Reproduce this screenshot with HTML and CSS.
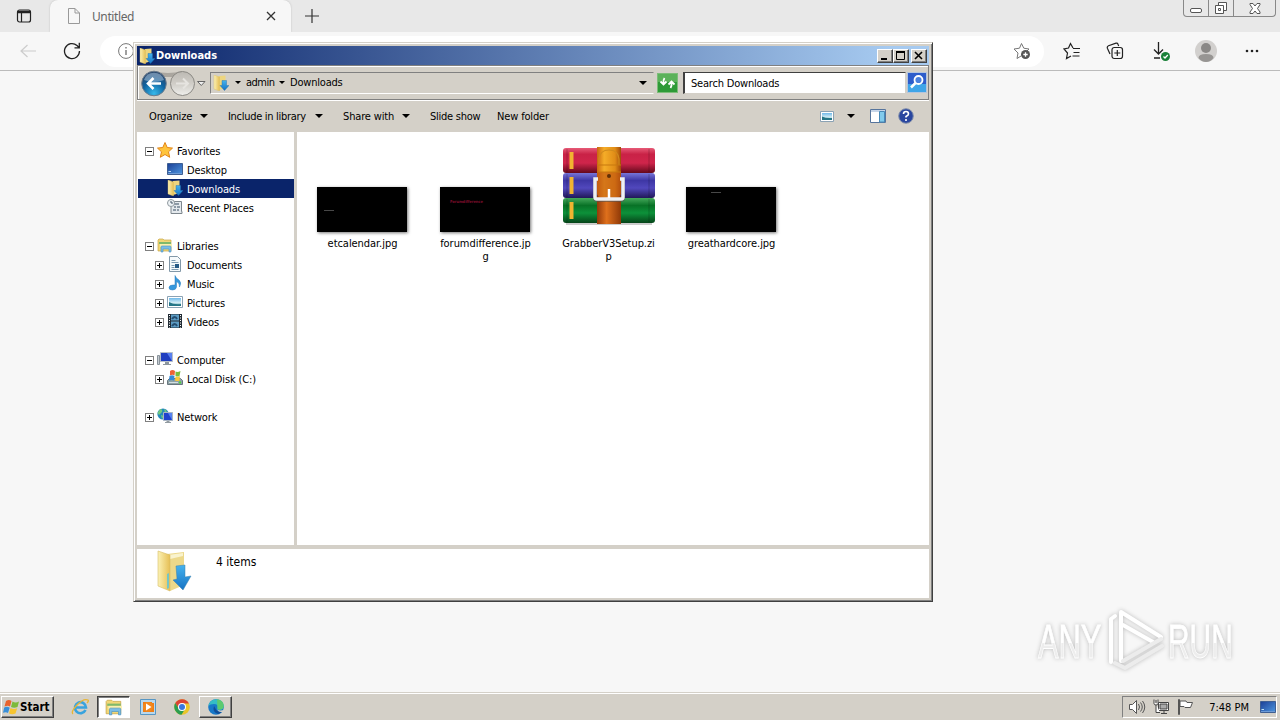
FILE: index.html
```html
<!DOCTYPE html>
<html lang="en">
<head>
    <meta charset="UTF-8">
    <title>Downloads</title>
    <link rel="stylesheet" href="styles.css">
</head>
<body>
    <!-- shared icons -->
    <svg class="icon-defs" width="0" height="0">
        <defs>
            <linearGradient id="gold" x1="0" x2="1"><stop offset="0" stop-color="#fbf1b4"/><stop offset="1" stop-color="#e6bf55"/></linearGradient>
            <linearGradient id="blue" x1="0" y1="0" x2="0" y2="1"><stop offset="0" stop-color="#45b2ee"/><stop offset="1" stop-color="#1673c4"/></linearGradient>
            <linearGradient id="screen" x1="0" y1="0" x2="1" y2="1"><stop offset="0" stop-color="#1b3f96"/><stop offset="1" stop-color="#4f98e0"/></linearGradient>
            <linearGradient id="sky" x1="0" y1="0" x2="0" y2="1"><stop offset="0" stop-color="#6fb9ea"/><stop offset=".6" stop-color="#d5eef5"/><stop offset="1" stop-color="#2a7d85"/></linearGradient>
        </defs>
        <symbol id="i-downloads" viewBox="0 0 16 16">
            <path d="M6 1l6.500-.5V13L6 15z" fill="#edd57f"/>
            <path d="M1 0l5.500 2v14L1 14z" fill="url(#gold)" stroke="#d9bd62" stroke-width=".4"/>
            <path d="M9 5.500h4.500v5H16L11.500 15.500 7 10.500h2z" fill="url(#blue)" stroke="#1b6cab" stroke-width=".4"/>
        </symbol>
        <symbol id="i-library" viewBox="0 0 16 16">
            <path d="M1 3l1-1h4l1 1h7v11H1z" fill="#f1d777" stroke="#c8a647" stroke-width=".7"/>
            <path d="M2 5h12v2H2z" fill="#7fb96c"/><path d="M3 7h12v3H3z" fill="#faf0ad"/>
            <path d="M4 15V10q0-1 1-1h8q1 0 1 1v5h-2v-3H6v3z" fill="#79bde6" stroke="#4a92c4" stroke-width=".6"/>
        </symbol>
        <symbol id="i-desktop" viewBox="0 0 16 16">
            <path d="M.5 2.500h15v11H.5z" fill="url(#screen)" stroke="#3f5f92"/>
            <path d="M1 12.500h14" stroke="#6d9bd6"/><path d="M1.500 10.500h2.500" stroke="#bfe0f5"/>
        </symbol>
        <symbol id="i-picture" viewBox="0 0 16 16">
            <path d="M.5 2.500h15v11H.5z" fill="#fff" stroke="#8ba2b4"/>
            <path d="M2 4h12v8H2z" fill="url(#sky)"/><path d="M2 8q5 3 12 2v2H2z" fill="#257687"/>
        </symbol>
    </svg>

    <div class="browser">
        <div class="tab-strip">
            <svg class="tab-actions" viewBox="0 0 16 16" width="16" height="16" fill="none" stroke="#222" stroke-width="1.200"><rect x="1.500" y="2" width="13" height="12" rx="2"/><path d="M2 4h12" stroke-width="2.500"/><path d="M5.500 5v9"/></svg>
            <div class="tab">
                <svg viewBox="0 0 14 16" width="14" height="16" fill="none" stroke="#999"><path d="M1.500.5h6.500l4.500 4.500v10.500h-11zM8 .5V5h4.500"/></svg>
                <span class="tab-title">Untitled</span>
                <svg viewBox="0 0 10 10" width="10" height="10" stroke="#333" stroke-width="1.300"><path d="M1 1l8 8M9 1L1 9"/></svg>
            </div>
            <svg class="new-tab" viewBox="0 0 14 14" width="14" height="14" stroke="#333" stroke-width="1.200"><path d="M7 0v14M0 7h14"/></svg>
            <div class="caption">
                <span><svg viewBox="0 0 13 6" width="13" height="6"><rect x=".5" y="1.500" width="11" height="4" rx="1.500" fill="#fff" stroke="#555"/></svg></span>
                <span><svg viewBox="0 0 14 14" width="14" height="14" fill="#fff" stroke="#555"><path d="M4.500 1.500h8v8h-8z"/><path d="M1.500 4.500h8v8h-8z"/><path d="M4.500 7.500h2v2h-2z"/></svg></span>
                <span><svg viewBox="0 0 12 11" width="12" height="11" fill="#fff" stroke="#555"><path d="M1 .5h3l2 2.500 2-2.500h3v1L8.500 5.500 11 9v1.500H8L6 8l-2 2.500H1V9l2.500-3.500L1 1.500z"/></svg></span>
            </div>
        </div>
        <div class="toolbar">
            <svg class="back" viewBox="0 0 16 14" width="16" height="14" fill="none" stroke="#ccc" stroke-width="1.200"><path d="M16 7H1M7.500 1L1 7l6.500 6"/></svg>
            <svg class="reload" viewBox="0 0 18 18" width="18" height="18" fill="none" stroke="#222" stroke-width="1.300"><path d="M16.500 9a7.500 7.500 0 1 1-2.500-5.500L16 5.500M16.300.8v5H11.500"/></svg>
            <div class="address">
                <svg viewBox="0 0 16 16" width="16" height="16" fill="none" stroke="#777"><circle cx="8" cy="8" r="7.400"/><path d="M8 7v5M8 4v1.600" stroke-width="1.400"/></svg>
                <svg viewBox="0 0 18 18" width="18" height="18" fill="none" stroke="#777"><path d="M8 14l-4 2.500 1-5.500-4-4 5.500-.8L8.500 1.500l2.300 4.700 5.200.8-2 2"/><circle cx="12.500" cy="12.500" r="4.500" fill="#555" stroke="none"/><path d="M12.500 10.300v4.400M10.300 12.500h4.400" stroke="#fff" stroke-width="1.300"/></svg>
            </div>
            <div class="tools">
                <svg viewBox="0 0 18 18" width="18" height="18" fill="none" stroke="#222" stroke-width="1.200"><path d="M10 6L7.500 1.500 5.500 6 1 7l3.500 4-1 5.500 4.500-2.500M10 6.500h7M10.500 10.500h6M9.500 14h7"/></svg>
                <svg viewBox="0 0 18 18" width="18" height="18" fill="none" stroke="#222" stroke-width="1.200"><path d="M4 12L1.500 6.500q-.8-2 1-2.800L10 1.200q1.500-.4 2 1l.7 1.800"/><rect x="6" y="5.500" width="10.500" height="11" rx="2.200"/><path d="M11.300 8v6M8.300 11h6"/></svg>
                <svg viewBox="0 0 18 20" width="18" height="20" fill="none" stroke="#222" stroke-width="1.300"><path d="M6.500 1v12M2 8.500l4.500 4.500L11 8.500M2 17h6"/><circle cx="13.500" cy="15.500" r="4.500" fill="#198038" stroke="none"/><path d="M11.500 15.500l1.500 1.500 2.800-3" stroke="#fff"/></svg>
                <svg viewBox="0 0 22 22" width="22" height="22"><circle cx="11" cy="11" r="11" fill="#d2d0ce"/><circle cx="11" cy="8" r="5" fill="#8a8886"/><path d="M3.500 18q0-4 7.500-4t7.500 4q-3 4-7.500 4t-7.500-4z" fill="#979593"/></svg>
                <svg viewBox="0 0 14 4" width="14" height="4" fill="#222"><circle cx="2" cy="2" r="1.300"/><circle cx="7" cy="2" r="1.300"/><circle cx="12" cy="2" r="1.300"/></svg>
            </div>
        </div>
        <div class="page"></div>
    </div>

    <svg class="watermark" viewBox="0 0 230 74" width="230" height="74">
        <defs><linearGradient id="wm" x1="0" y1="0" x2="0" y2="1"><stop offset=".53" stop-color="#fff"/><stop offset=".54" stop-color="#ededed"/></linearGradient></defs>
        <g fill="url(#wm)">
            <text transform="translate(7 54) scale(.63 1)">ANY</text>
            <text transform="translate(137 54) scale(.61 1)">RUN</text>
        </g>
        <g fill="none" stroke="#fff" stroke-width="4" stroke-linejoin="round" stroke-linecap="round">
            <path d="M90 57V8l40 25"/><path d="M80 58V15l4-3"/><path d="M92 21l30 17"/>
            <path d="M130 35L92 57M131 42L94 64l-10-5" stroke="#ececec"/>
        </g>
    </svg>

    <div class="window">
        <div class="title-bar">
            <svg width="16" height="16"><use href="#i-downloads"/></svg>
            <span class="title">Downloads</span>
            <span class="win-btn"><svg viewBox="0 0 12 10" width="12" height="10"><path d="M2 8h6" stroke="#000" stroke-width="2"/></svg></span>
            <span class="win-btn"><svg viewBox="0 0 12 10" width="12" height="10" fill="none" stroke="#000"><path d="M1.500 1.500h8v7h-8z"/><path d="M1 1h9" stroke-width="2"/></svg></span>
            <span class="win-btn win-close"><svg viewBox="0 0 12 10" width="12" height="10" stroke="#000" stroke-width="1.600"><path d="M2 1l7 7M9 1L2 8"/></svg></span>
        </div>

        <div class="nav-bar">
            <svg class="travel" viewBox="0 0 68 28" width="68" height="28">
                <defs>
                    <radialGradient id="ball" cx=".5" cy=".9" r=".8"><stop offset="0" stop-color="#35b8ea"/><stop offset=".6" stop-color="#0f63a0"/><stop offset="1" stop-color="#2b4a70"/></radialGradient>
                    <linearGradient id="grayball" x1="0" y1="0" x2="0" y2="1"><stop offset="0" stop-color="#bcb9b3"/><stop offset=".5" stop-color="#d0cdc7"/><stop offset="1" stop-color="#efefec"/></linearGradient>
                </defs>
                <path d="M14 2q14 4 28 0v6H14z" fill="#aaa69f"/>
                <circle cx="14" cy="14.500" r="12.300" fill="url(#ball)" stroke="#6d7c8c"/>
                <path d="M4 11a10.500 10.500 0 0 1 20 0q-10 4-20 0z" fill="#9bb9d3" opacity=".6"/>
                <path d="M21 14.500H9M13.500 9L8 14.500l5.500 5.500" fill="none" stroke="#fff" stroke-width="2.600"/>
                <circle cx="42.500" cy="14.500" r="12" fill="url(#grayball)" stroke="#8b8984"/>
                <path d="M36 14.500h12M43 9.500l5 5-5 5" fill="none" stroke="#e6e4e0" stroke-width="2"/>
                <path d="M57.500 12.500h7.500l-3.700 4z" fill="#eee" stroke="#666"/>
            </svg>
            <div class="crumbs">
                <svg width="16" height="16"><use href="#i-downloads"/></svg>
                <i class="arrow small"></i>
                <span class="crumb-admin">admin</span>
                <i class="arrow small"></i>
                <span class="crumb-current">Downloads</span>
                <i class="arrow"></i>
            </div>
            <svg class="refresh" viewBox="0 0 21 20" width="21" height="20">
                <rect x=".5" y=".5" width="20" height="19" fill="#2e9a37" stroke="#7cbd78"/><path d="M1 1h19v8H1z" fill="#5cb25a"/>
                <path d="M7.500 5Q6 7 6.500 11M3.500 8.500l3 3 3-3M13.500 15q1.500-2 1-6M11.500 11.500l3-3 3 3" fill="none" stroke="#fff" stroke-width="1.800"/>
            </svg>
            <div class="search">Search Downloads</div>
            <svg class="search-btn" viewBox="0 0 20 21" width="20" height="21">
                <rect x=".5" y=".5" width="19" height="20" fill="#2e5dcb" stroke="#b4c5dd"/><path d="M1 12h18v8H1z" fill="#3fa5e8"/>
                <circle cx="11.500" cy="8" r="4" fill="#4a80dd" stroke="#fff" stroke-width="1.800"/><path d="M8.500 11L4 15.500" stroke="#fff" stroke-width="2.500"/>
            </svg>
        </div>

        <div class="command-bar">
            <span class="cmd cmd-organize">Organize</span><i class="arrow"></i>
            <span class="cmd cmd-include">Include in library</span><i class="arrow"></i>
            <span class="cmd cmd-share">Share with</span><i class="arrow"></i>
            <span class="cmd cmd-slide">Slide show</span>
            <span class="cmd cmd-new">New folder</span>
            <div class="view-tools">
                <svg viewBox="0 0 14 11" width="14" height="11"><path d="M.5.5h13v10H.5z" fill="#fff" stroke="#8ba2b4"/><path d="M2 2h10v7H2z" fill="url(#sky)"/><path d="M2 5.500q4 2 10 1.500v2H2z" fill="#257687"/></svg>
                <i class="arrow"></i>
                <svg viewBox="0 0 16 14" width="16" height="14"><path d="M.5.5h15v13H.5z" fill="#fff" stroke="#56749c"/><path d="M1 2h14" stroke="#8fabd0"/><path d="M9.500 2.500h5v10.500h-5z" fill="#82cbec" stroke="#4789b7"/></svg>
                <svg viewBox="0 0 16 16" width="16" height="16"><circle cx="8" cy="8" r="7.300" fill="#29469f" stroke="#8390ab"/><path d="M5.500 6q0-2.500 2.500-2.500T10.500 6Q10.500 7.300 8 8.500v1M8 11v2" fill="none" stroke="#fff" stroke-width="1.600"/></svg>
            </div>
        </div>

        <div class="panes">
            <div class="tree">
                <div class="node"><i class="toggle minus"></i>
                    <svg viewBox="0 0 16 16" width="16" height="16"><path d="M8 .5l2.200 5 5.300.6-4 3.700 1.200 5.500L8 12.500l-4.700 2.800 1.200-5.500-4-3.700 5.300-.6z" fill="#ffc43c" stroke="#e28418"/></svg>
                    <span>Favorites</span></div>
                <div class="node child"><svg width="16" height="16"><use href="#i-desktop"/></svg><span>Desktop</span></div>
                <div class="node child selected"><svg width="16" height="16"><use href="#i-downloads"/></svg><span>Downloads</span></div>
                <div class="node child">
                    <svg viewBox="0 0 16 16" width="16" height="16"><path d="M4 2.500h10.500v10H15v2H4z" fill="#e4e9ed" stroke="#7d868d"/><path d="M7 5h5M7 8h2M10 8h3M6 11h3M10 11h2" stroke="#708090" stroke-width="1.500"/><circle cx="4" cy="4" r="3.500" fill="#eef3f6" stroke="#8f989e"/><path d="M4 2v2h2" fill="none" stroke="#456"/></svg>
                    <span>Recent Places</span></div>

                <div class="node group"><i class="toggle minus"></i><svg width="16" height="16"><use href="#i-library"/></svg><span>Libraries</span></div>
                <div class="node child"><i class="toggle"></i>
                    <svg viewBox="0 0 16 16" width="16" height="16"><path d="M2.500.5h8l3 3v12h-11z" fill="#f6fafc" stroke="#8298a8"/><path d="M4.500 4.500h4M4.500 6.500h7M4.500 9.500h3M4.500 11.500h3M4.500 13.500h7" stroke="#7e9bb2"/><path d="M8 8h4v4H8z" fill="#275a86"/></svg>
                    <span>Documents</span></div>
                <div class="node child"><i class="toggle"></i>
                    <svg viewBox="0 0 16 16" width="16" height="16"><path d="M8 .5q1 3 4 4.500 3 2.500.5 7 .5-4-3-5.500v5.500q-.5 3-4 3-3.500 0-3.500-2.200 0-2.800 4-2.800H8z" fill="#3598dd" stroke="#277abd" stroke-width=".5"/></svg>
                    <span>Music</span></div>
                <div class="node child"><i class="toggle"></i><svg width="16" height="16"><use href="#i-picture"/></svg><span>Pictures</span></div>
                <div class="node child"><i class="toggle"></i>
                    <svg viewBox="0 0 16 16" width="16" height="16"><path d="M1 1h14v14H1z" fill="#222c35"/><path d="M4 1.500h8v6H4zM4 8.500h8v6H4z" fill="#5c9cc4"/><path d="M5 6q3-4 5 0M5 13q3-4 5 0" stroke="#234d70" stroke-width="2" fill="none"/><path d="M2.500 2v13M13.500 2v13" stroke="#fff" stroke-dasharray="1 1.500"/></svg>
                    <span>Videos</span></div>

                <div class="node group"><i class="toggle minus"></i>
                    <svg viewBox="0 0 16 16" width="16" height="16"><path d="M.5 4.500h2v9h-2z" fill="#c5ccd2" stroke="#89929a"/><path d="M3.500 1.500h12v9h-12z" fill="#203ec0" stroke="#b7bfc9"/><path d="M10 2h5v8z" fill="#5a80ef"/><path d="M8 11h4v2h2v1H6v-1h2z" fill="#8c969d"/></svg>
                    <span>Computer</span></div>
                <div class="node child"><i class="toggle"></i>
                    <svg viewBox="0 0 16 16" width="16" height="16"><path d="M.5 10.500l2-2h11l2 2v4H.5z" fill="#8fa3a5" stroke="#68777f"/><path d="M2 12.500h9" stroke="#d4dee3"/><path d="M12 12.500h2" stroke="#4bdb36" stroke-width="2"/><path d="M3 1q2.500-2 5 0L7.500 5.500Q5.500 4 3 5.500z" fill="#ed6337"/><path d="M8.500 1.500q2 1 5-.5L12.500 6q-2 1-4 0z" fill="#79bd3e"/><path d="M2.500 6q2.500-1.500 5 0l-.5 4.500q-2-1-5 0z" fill="#3489d8"/><path d="M8.500 6.500q2 1 4.500-.5l-.5 4.500q-2 1-4.500 0z" fill="#fac83a"/></svg>
                    <span>Local Disk (C:)</span></div>

                <div class="node group"><i class="toggle"></i>
                    <svg viewBox="0 0 16 16" width="16" height="16"><circle cx="6" cy="6" r="5.600" fill="#2489bd"/><path d="M3 1q3 0 2 3L2 7 .5 5zM7 1l3 2-2 2zM4 7l3 1-2 3z" fill="#72c980"/><path d="M6.500 4.500h9v8h-9z" fill="#2143cd" stroke="#a9b5c3"/><path d="M11 5h4v7z" fill="#5883f0"/><path d="M9.500 13h3v1H14v1H8v-1h1.500z" fill="#929ba1"/></svg>
                    <span>Network</span></div>
            </div>

            <div class="files">
                <div class="file"><div class="thumb"><i class="scrap scrap-a"></i></div><span>etcalendar.jpg</span></div>
                <div class="file"><div class="thumb"><b class="scrap-red">Forumdifference</b></div><span>forumdifference.jp<br>g</span></div>
                <div class="file">
                    <svg class="zip" viewBox="0 0 92 80" width="92" height="80">
                        <defs>
                            <linearGradient id="red" x1="0" y1="0" x2="0" y2="1"><stop offset="0" stop-color="#e75a77"/><stop offset=".25" stop-color="#c92246"/><stop offset=".6" stop-color="#cf254b"/><stop offset="1" stop-color="#64091c"/></linearGradient>
                            <linearGradient id="violet" x1="0" y1="0" x2="0" y2="1"><stop offset="0" stop-color="#7775d8"/><stop offset=".3" stop-color="#3e37a5"/><stop offset=".6" stop-color="#5148bd"/><stop offset="1" stop-color="#211858"/></linearGradient>
                            <linearGradient id="green" x1="0" y1="0" x2="0" y2="1"><stop offset="0" stop-color="#45a85b"/><stop offset=".3" stop-color="#087226"/><stop offset=".6" stop-color="#0d913a"/><stop offset="1" stop-color="#064419"/></linearGradient>
                            <linearGradient id="strap" x1="0" x2="1"><stop offset="0" stop-color="#c9670f"/><stop offset=".3" stop-color="#f5ad28"/><stop offset=".75" stop-color="#e08c17"/><stop offset="1" stop-color="#a04909"/></linearGradient>
                            <linearGradient id="strap2" x1="0" x2="1"><stop offset="0" stop-color="#93390a"/><stop offset=".4" stop-color="#df701c"/><stop offset="1" stop-color="#8f3908"/></linearGradient>
                        </defs>
                        <path d="M3 78h86" stroke="#ccc" stroke-width="2"/>
                        <rect y="2" width="92" height="25" rx="3" fill="url(#red)"/>
                        <rect y="27" width="92" height="25" rx="3" fill="url(#violet)"/>
                        <rect y="52" width="92" height="25" rx="3" fill="url(#green)"/>
                        <path d="M4 3v23M4 28v23M4 53v23M86 3v23M86 28v23M86 53v23" stroke="#000" opacity=".2"/>
                        <path d="M8.500 6v17M8.500 31v17M8.500 56v17" stroke="#f1b431" stroke-width="4"/>
                        <rect x="34" y="50" width="24" height="28" fill="url(#strap2)"/>
                        <path d="M34 1h24v46q0 4-4 4H38q-4 0-4-4z" fill="url(#strap)"/>
                        <path d="M34 26h24v21q0 4-4 4H38q-4 0-4-4z" fill="#c05410" opacity=".6"/>
                        <path d="M36 19V13q1-9 10-9t10 9v6" fill="none" stroke="#d08a1c" stroke-width="1.200"/>
                        <path d="M34 19h24M34 26h24" stroke="#c7780f"/><circle cx="46" cy="30" r="2" fill="#613006"/>
                        <path d="M34 34h-2v18q0 2 2 2h24q2 0 2-2V34h-2" fill="none" stroke="#555" stroke-width="4" opacity=".6"/>
                        <path d="M35 33h-3v18q0 2 2 2h24q2 0 2-2V33h-3" fill="none" stroke="#eef0f3" stroke-width="3.500"/>
                        <path d="M46 43v9" stroke="#fff" stroke-width="2.500"/>
                    </svg>
                    <span>GrabberV3Setup.zi<br>p</span>
                </div>
                <div class="file"><div class="thumb"><i class="scrap scrap-b"></i></div><span>greathardcore.jpg</span></div>
            </div>
        </div>

        <div class="details">
            <svg viewBox="0 0 36 42" width="36" height="42">
                <path d="M10 4l17-2v33l-14 6z" fill="#ecd88a"/><path d="M11 5l15-2v3l-13 3z" fill="#f9f3ce"/>
                <path d="M1 1l12 4v36L1 36z" fill="url(#gold)" stroke="#d7bc67" stroke-width=".6"/><path d="M10 24l2-1v15l-2 1z" fill="#74c6c5"/>
                <path d="M19 16l9-1v12l6-1-8 14-10-10 4-1z" fill="url(#blue)" stroke="#3980ae" stroke-width=".5"/>
            </svg>
            <span>4 items</span>
        </div>
    </div>

    <div class="taskbar">
        <div class="start">
            <svg viewBox="0 0 17 16" width="17" height="16"><path d="M3 2q3-2 5.500 0L7 7.500Q5 6 1.500 7.500z" fill="#e9632d"/><path d="M9.500 2.500q3 2 6.500 0L14.500 8Q11 9.500 8 8z" fill="#7dba3b"/><path d="M1.200 8.500q3-1.500 5.500.3L5 14q-2-1.500-5-.2z" fill="#398fd8"/><path d="M7.500 9q3 2 6.700.3L12.500 14.500Q9 16 6 14.500z" fill="#f6c430"/></svg>
            <b>Start</b>
        </div>
        <div class="task">
            <svg viewBox="0 0 18 18" width="18" height="18" fill="none"><path d="M14.500 12a5.500 5.500 0 1 1 .5-2.500H5" stroke="#38a3de" stroke-width="2.600"/><path d="M2 16Q-.5 14 6 7t11-5q1 1-1 3" stroke="#e8b534" stroke-width="1.300"/></svg>
        </div>
        <div class="task pressed"><svg width="18" height="18"><use href="#i-library"/></svg></div>
        <div class="task">
            <svg viewBox="0 0 16 16" width="16" height="16"><path d="M.5.5h15v15H.5z" fill="#b9d8ed" stroke="#5796c3"/><path d="M3 3h9v1h2v9H3z" fill="#ee7d16"/><circle cx="8" cy="8" r="5" fill="#f1881f"/><path d="M6 4.500v7L11.500 8z" fill="#fff"/></svg>
        </div>
        <div class="task">
            <svg viewBox="0 0 16 16" width="16" height="16"><circle cx="8" cy="8" r="7.800" fill="#eac52a"/><path d="M1.200 4A8 8 0 0 1 15 4.500H8L5 10z" fill="#dc4334"/><path d="M1.200 4A8 8 0 0 0 7.500 15.800L11 10H5z" fill="#2b9d50"/><circle cx="8" cy="8" r="4" fill="#fff"/><circle cx="8" cy="8" r="3" fill="#3a77df"/></svg>
        </div>
        <div class="task raised">
            <svg viewBox="0 0 16 16" width="16" height="16"><circle cx="8" cy="8" r="7.800" fill="#1778c8"/><path d="M.3 7Q2 .3 8 .2q7 .3 7.700 6.500 0 4-4.200 4-2.500 0-2-1.700 1-4-3.500-4Q2 5 .3 7z" fill="#35bdc5"/><path d="M9 .3q6.300.7 6.700 6.400 0 4-4.200 4-2.500 0-2-1.700z" fill="#5cca70"/><path d="M6 7q-2 6 4 8 3-.5 4.500-3-5 1.500-6.500-1.500z" fill="#114e99"/><path d="M9.500 9q-.5 2.500 3 2.500 2.500 0 3.500-1v2q-5 1.500-6.500-1.500z" fill="#d4d0c8"/></svg>
        </div>
        <div class="tray">
            <svg viewBox="0 0 17 14" width="17" height="14" fill="none" stroke="#555"><path d="M.5 4.500h3l4-4v13l-4-4h-3z" fill="#fff"/><path d="M9.500 4q2 3 0 6M11.500 2.500q3.500 4.500 0 9M13.500 1q4.500 6 0 12"/></svg>
            <svg viewBox="0 0 17 16" width="17" height="16" fill="#fff" stroke="#444"><path d="M5.500 3.500h10v8h-10z"/><path d="M7 5h7v5H7z" fill="#aaa"/><path d="M8 14.500h6M11 12v2"/><path d="M1 .5v4q0 1.500 2 1.500v7.500h4M5 .5v4Q5 6 3 6M3 1v3"/></svg>
            <svg viewBox="0 0 17 16" width="17" height="16" fill="#fff" stroke="#555"><path d="M1.500 15.500V.5h1v15zM3 2h6l1 1.500h5.500l-2 5H8L7 7.500H3z"/></svg>
            <span class="clock">7:48 PM</span>
            <svg width="16" height="16"><use href="#i-desktop"/></svg>
        </div>
    </div>
</body>
</html>
```
FILE: styles.css
```css
* {
    box-sizing: border-box;
}

body {
    margin: 0;
    width: 1280px;
    height: 720px;
    overflow: hidden;
    display: flex;
    flex-direction: column;
    background: #f7f7f7;
    color: #000;
    font-family: "DejaVu Sans Condensed", "DejaVu Sans", sans-serif;
    font-stretch: condensed;
    font-size: 11px;
    line-height: 13px;
    white-space: nowrap;
}

svg {
    display: block;
    flex-shrink: 0;
}

.icon-defs {
    position: absolute;
}

/* browser behind */
.browser {
    flex: 1;
    display: flex;
    flex-direction: column;
}

.tab-strip {
    height: 32px;
    background: #e8e8e8;
    display: flex;
    align-items: center;
    padding-left: 16px;
}

.tab {
    width: 241px;
    height: 32px;
    margin-left: 18px;
    padding: 0 15px 0 17px;
    background: #f7f7f7;
    border-radius: 8px 8px 0 0;
    box-shadow: 0 0 2px #bbb;
    clip-path: inset(0 -3px 0 -3px);
    display: flex;
    align-items: center;
}

.tab-title {
    flex: 1;
    margin-left: 11px;
    font: 12px "Noto Sans", sans-serif;
    letter-spacing: -0.4px;
    color: #666;
}

.new-tab {
    margin-left: 14px;
}

.caption {
    align-self: flex-start;
    display: flex;
    height: 17px;
    margin: 0 4px 0 auto;
    border: 1px solid #888;
    border-top: 0;
    border-radius: 0 0 4px 4px;
}

.caption span {
    width: 25px;
    display: flex;
    align-items: center;
    justify-content: center;
    border-right: 1px solid #888;
}

.caption span:first-child {
    padding-top: 4px;
}

.caption span:last-child {
    width: 41px;
    border: 0;
}

.toolbar {
    height: 39px;
    border-bottom: 1px solid #bbb;
    display: flex;
    align-items: center;
    padding: 0 21px 0 20px;
}

.reload {
    margin-left: 27px;
}

.address {
    width: 944px;
    height: 31px;
    margin-left: 19px;
    padding: 0 13px 0 18px;
    border-radius: 16px;
    background: #fff;
    display: flex;
    align-items: center;
    justify-content: space-between;
}

.tools {
    flex: 1;
    margin-left: 19px;
    display: flex;
    align-items: center;
    justify-content: space-between;
}

.tools svg:nth-child(2),
.tools svg:nth-child(4) {
    margin-right: 3px;
}

.watermark {
    position: absolute;
    left: 1031px;
    top: 604px;
    font: 49px "Liberation Sans", sans-serif;
    filter: drop-shadow(0 0 2px #bbb);
}

.watermark text {
    stroke: #fff;
    stroke-width: 0.8px;
}

/* explorer window */
.window {
    position: absolute;
    left: 133px;
    top: 42px;
    width: 800px;
    height: 560px;
    padding: 2px 1px 1px 2px;
    background: #d4d0c8;
    border: 1px solid #404040;
    border-top-color: #d4d0c8;
    border-left-color: #d4d0c8;
    box-shadow: inset 1px 1px #fff, inset -1px -1px #808080;
    display: flex;
    flex-direction: column;
}

.title-bar {
    height: 19px;
    margin: 1px 2px 0 1px;
    padding: 0 2px;
    background: linear-gradient(90deg, #0a246a, #a6caf0 95%);
    display: flex;
    align-items: center;
}

.title {
    flex: 1;
    margin-left: 1px;
    color: #fff;
    font-weight: bold;
}

.win-btn {
    width: 16px;
    height: 14px;
    padding: 1px;
    background: #d4d0c8;
    border: 1px solid #404040;
    border-top-color: #fff;
    border-left-color: #fff;
    box-shadow: inset -1px -1px #808080;
}

.win-close {
    margin-left: 2px;
}

.nav-bar {
    height: 35px;
    margin: 0 2px 0 1px;
    border: 1px solid #808080;
    box-shadow: inset 1px 1px #fff, 0 1px #fff;
    display: flex;
    align-items: center;
}

.travel {
    margin-left: 2px;
}

.crumbs {
    width: 444px;
    height: 22px;
    margin-left: 2px;
    padding: 0 6px 0 2px;
    border: 1px solid #808080;
    border-right-color: #d4d0c8;
    border-bottom-color: #fff;
    display: flex;
    align-items: center;
}

.arrow {
    flex-shrink: 0;
    border: 4px solid transparent;
    border-top-color: #000;
    border-bottom: 0;
}

.arrow.small {
    border-width: 3px 3px 0;
    margin-left: 6px;
}

.crumb-admin {
    width: 28px;
    margin-left: 5px;
    letter-spacing: -0.5px;
}

.crumb-admin + .arrow {
    margin-left: 5px;
}

.crumb-current {
    flex: 1;
    margin-left: 5px;
    letter-spacing: -0.2px;
}

.refresh {
    margin-left: 3px;
}

.search {
    flex: 1;
    height: 22px;
    margin-left: 5px;
    padding: 4px 6px 3px;
    background: #fff;
    border: 1px solid #d4d0c8;
    border-top-color: #404040;
    border-left: 2px solid #404040;
    letter-spacing: -0.2px;
}

.search-btn {
    margin: 0 1px;
}

.command-bar {
    height: 32px;
    padding-left: 13px;
    display: flex;
    align-items: center;
}

.cmd {
    letter-spacing: -0.15px;
}

.cmd-organize { width: 51px; }
.cmd-include { width: 87px; margin-left: 20px; letter-spacing: -0.3px; }
.cmd-share { width: 59px; margin-left: 20px; }
.cmd-slide { width: 67px; margin-left: 20px; letter-spacing: -0.25px; }

.view-tools {
    margin: 0 17px 0 auto;
    display: flex;
    align-items: center;
    gap: 12px;
}

.view-tools .arrow {
    margin: 0 3px 0 1px;
}

.panes {
    height: 413px;
    margin: 0 2px 0 1px;
    display: flex;
    gap: 3px;
}

.tree {
    width: 157px;
    padding: 9px 0 0 1px;
    background: #fff;
}

.node {
    height: 19px;
    padding: 1px 0 0 7px;
    display: flex;
    align-items: center;
}

.node svg {
    margin-top: -2px;
}

.node span {
    margin-left: 4px;
    letter-spacing: -0.15px;
}

.node.child {
    padding-left: 29px;
}

.node.child:has(.toggle) {
    padding-left: 17px;
}

.node.group {
    margin-top: 19px;
}

.node.selected {
    color: #fff;
    background: #0a246a;
}

.toggle {
    width: 9px;
    height: 9px;
    margin-right: 3px;
    border: 1px solid #808080;
    background:
        linear-gradient(#000, #000) center / 5px 1px no-repeat,
        linear-gradient(#000, #000) center / 1px 5px no-repeat;
}

.toggle.minus {
    background: linear-gradient(#000, #000) center / 5px 1px no-repeat;
}

.files {
    flex: 1;
    padding: 13px 0 0 4px;
    background: #fff;
    display: flex;
    align-items: flex-start;
}

.file {
    width: 123px;
    display: flex;
    flex-direction: column;
    align-items: center;
    text-align: center;
    letter-spacing: -0.05px;
}

.thumb {
    width: 90px;
    height: 45px;
    margin: 42px 1px 5px 0;
    background: #000;
    box-shadow: 1px 1px 3px #777;
}

.zip {
    margin: 1px 0 11px;
}

.scrap {
    display: block;
    width: 10px;
    height: 1px;
    background: #484848;
}

.scrap-a { margin: 23px 0 0 7px; }
.scrap-b { margin: 5px 0 0 25px; }
.thumb:has(.scrap) { display: flow-root; }

.scrap-red {
    display: block;
    padding: 11px 0 0 10px;
    font-size: 4px;
    line-height: 8px;
    text-align: left;
    color: #7c0e2c;
}

.details {
    flex: 1;
    margin: 4px 2px 2px 1px;
    padding: 1px 0 0 20px;
    background: #fff;
    display: flex;
}

.details span {
    margin: 6px 0 0 23px;
    font-size: 12px;
}

/* taskbar */
.taskbar {
    height: 28px;
    padding: 3px 3px 2px 1px;
    background: #d4d0c8;
    border-top: 1px solid #d4d0c8;
    box-shadow: inset 0 1px #fff;
    display: flex;
    align-items: center;
}

.start,
.raised {
    border: 1px solid #404040;
    border-top-color: #fff;
    border-left-color: #fff;
    box-shadow: inset -1px -1px #808080;
}

.start {
    width: 53px;
    height: 22px;
    margin-right: 9px;
    padding-left: 1px;
    display: flex;
    align-items: center;
}

.start b {
    font-size: 11.5px;
}

.task {
    width: 33px;
    height: 22px;
    margin-right: 1px;
    display: flex;
    align-items: center;
    justify-content: center;
}

.pressed {
    background: #fff;
    border: 1px solid #fff;
    border-top-color: #404040;
    border-left-color: #404040;
    box-shadow: inset 1px 1px #808080;
}

.tray {
    width: 155px;
    height: 22px;
    margin-left: auto;
    padding: 0 0 0 6px;
    border: 1px solid #808080;
    border-right-color: #fff;
    border-bottom-color: #fff;
    display: flex;
    align-items: center;
    gap: 7px;
}

.clock {
    flex: 1;
    text-align: right;
    margin-right: 4px;
}
```
